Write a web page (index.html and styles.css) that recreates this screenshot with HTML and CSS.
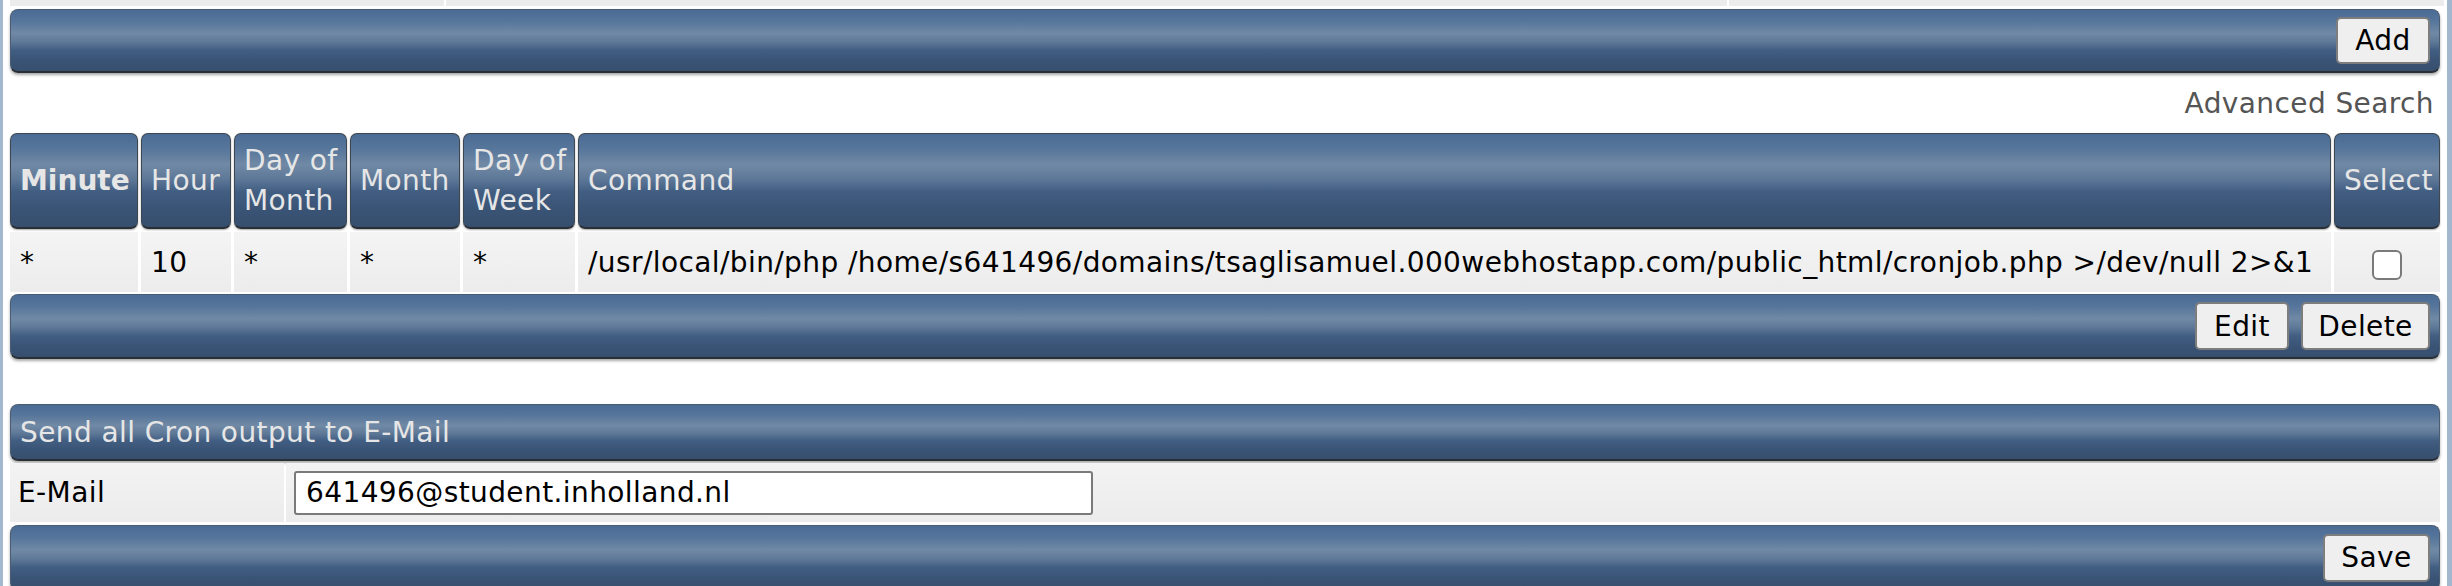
FILE: index.html
```html
<!DOCTYPE html>
<html>
<head>
<meta charset="utf-8">
<title>Cron Jobs</title>
<link rel="stylesheet" href="styles.css">
</head>
<body>
<div class="page">
  <div class="toprow">
    <div class="tcell tc-a"></div>
    <div class="tcell tc-b"></div>
    <div class="tcell tc-c"></div>
  </div>

  <div class="bar bar-actions">
    <button class="btn btn-add" type="button">Add</button>
  </div>

  <div class="adv"><span class="adv-link">Advanced Search</span></div>

  <table class="cron">
    <colgroup>
      <col class="col-min">
      <col class="col-hour">
      <col class="col-dom">
      <col class="col-month">
      <col class="col-dow">
      <col class="col-cmd">
      <col class="col-sel">
    </colgroup>
    <thead>
      <tr>
        <th class="hcell sorted">Minute</th>
        <th class="hcell">Hour</th>
        <th class="hcell">Day of Month</th>
        <th class="hcell">Month</th>
        <th class="hcell">Day of Week</th>
        <th class="hcell">Command</th>
        <th class="hcell">Select</th>
      </tr>
    </thead>
    <tbody>
      <tr>
        <td class="dcell">*</td>
        <td class="dcell">10</td>
        <td class="dcell">*</td>
        <td class="dcell">*</td>
        <td class="dcell">*</td>
        <td class="dcell">/usr/local/bin/php /home/s641496/domains/tsaglisamuel.000webhostapp.com/public_html/cronjob.php &gt;/dev/null 2&gt;&amp;1</td>
        <td class="dcell center"><span class="checkbox"></span></td>
      </tr>
    </tbody>
  </table>

  <div class="bar bar-actions bar-2">
    <button class="btn btn-edit" type="button">Edit</button>
    <button class="btn btn-delete" type="button">Delete</button>
  </div>

  <div class="bar bar-title">Send all Cron output to E-Mail</div>

  <div class="form-row">
    <div class="label-cell">E-Mail</div>
    <div class="input-cell">
      <div class="text-input">641496@student.inholland.nl</div>
    </div>
  </div>

  <div class="bar bar-actions bar-3">
    <button class="btn btn-save" type="button">Save</button>
  </div>
</div>
</body>
</html>
```

FILE: styles.css
```css
html, body {
  margin: 0;
  padding: 0;
  background: #ffffff;
}

body {
  font-family: "DejaVu Sans", Verdana, sans-serif;
  font-size: 28px;
  letter-spacing: 0.4px;
  color: #111;
  overflow: hidden;
}

.page {
  box-sizing: border-box;
  width: 2452px;
  min-height: 600px;
  border-left: 3px solid #a3b7cf;
  border-right: 5px solid #a3b7cf;
  padding: 0 7px;
}

/* top partial row */
.toprow {
  display: flex;
  gap: 2px;
  height: 6px;
  margin-right: -4px;
}
.tcell {
  background: #ececec;
}
.tc-a { width: 434px; }
.tc-b { width: 1281px; }
.tc-c { flex: 1; }

/* blue bars */
.bar {
  box-sizing: border-box;
  border: 1px solid #4b5d73;
  border-bottom: 2px solid #2a2f36;
  border-radius: 8px;
  background: linear-gradient(to bottom,
    #4a6b94 0%,
    #56759b 18%,
    #7089a5 38%,
    #5f7998 52%,
    #415e82 66%,
    #3a5476 82%,
    #374f6e 100%);
  box-shadow: 0 2px 3px rgba(0, 0, 0, 0.35);
}

.bar-actions {
  display: flex;
  justify-content: flex-end;
  align-items: center;
  gap: 12px;
  height: 64px;
  margin-top: 3px;
  padding-right: 9px;
}

.bar-2 {
  height: 65px;
  margin-top: -1px;
}

.bar-3 {
  height: 66px;
  margin-top: 3px;
}

.bar-title {
  display: flex;
  align-items: center;
  height: 57px;
  margin-top: 45px;
  padding-left: 9px;
  color: #e6e6e6;
}

/* buttons */
.btn {
  box-sizing: border-box;
  height: 48px;
  padding: 0;
  font-family: "DejaVu Sans", Verdana, sans-serif;
  font-size: 28px;
  letter-spacing: 0.4px;
  color: #000;
  background: #efefef;
  border: 2px solid #7d7d7d;
  border-radius: 5px;
}
.btn-add { width: 94px; height: 47px; }
.btn-edit { width: 94px; }
.btn-delete { width: 129px; }
.btn-save { width: 107px; }

/* advanced search */
.adv {
  display: flex;
  justify-content: flex-end;
  align-items: center;
  height: 57px;
  padding-top: 4px;
  box-sizing: border-box;
}
.adv-link {
  color: #555;
  padding-right: 6px;
}

/* table */
.cron {
  table-layout: fixed;
  border-collapse: separate;
  border-spacing: 3px 3px;
  width: calc(100% + 6px);
  margin: 0 -3px;
}
.col-min { width: 128px; }
.col-hour { width: 90px; }
.col-dom { width: 113px; }
.col-month { width: 110px; }
.col-dow { width: 112px; }
.col-sel { width: 106px; }

.hcell {
  box-sizing: border-box;
  height: 96px;
  padding: 0 3px 0 9px;
  text-align: left;
  font-weight: normal;
  line-height: 1.4;
  color: #e6e6e6;
  border: 1px solid #3e4650;
  border-bottom: 2px solid #2a2f36;
  border-radius: 7px;
  background: linear-gradient(to bottom,
    #4a6b94 0%,
    #57769b 16%,
    #7089a5 33%,
    #5e7898 48%,
    #415e82 62%,
    #3a5476 80%,
    #374f6e 100%);
  box-shadow: 0 1px 2px rgba(0, 0, 0, 0.35);
}
.hcell.sorted {
  font-weight: bold;
  letter-spacing: 0;
}

.dcell {
  box-sizing: border-box;
  height: 60px;
  padding: 0 10px;
  background: linear-gradient(to bottom, #f4f4f4, #ececec);
  color: #000;
  white-space: nowrap;
}
.dcell.center {
  text-align: center;
}

.checkbox {
  display: inline-block;
  box-sizing: border-box;
  width: 30px;
  height: 30px;
  margin-top: 4px;
  vertical-align: middle;
  background: #fff;
  border: 2px solid #7a7a7a;
  border-radius: 6px;
}

/* email row */
.form-row {
  display: flex;
  gap: 2px;
  height: 59px;
  margin-top: 2px;
}
.label-cell {
  display: flex;
  align-items: center;
  width: 274px;
  padding-left: 8px;
  box-sizing: border-box;
  background: linear-gradient(to bottom, #f3f3f3, #ececec);
  color: #000;
}
.input-cell {
  flex: 1;
  display: flex;
  align-items: center;
  padding-left: 8px;
  background: linear-gradient(to bottom, #f3f3f3, #ececec);
}
.text-input {
  box-sizing: border-box;
  width: 799px;
  height: 44px;
  padding-left: 10px;
  display: flex;
  align-items: center;
  background: #fff;
  border: 2px solid #7a7a7a;
  border-radius: 3px;
  color: #000;
}
```
